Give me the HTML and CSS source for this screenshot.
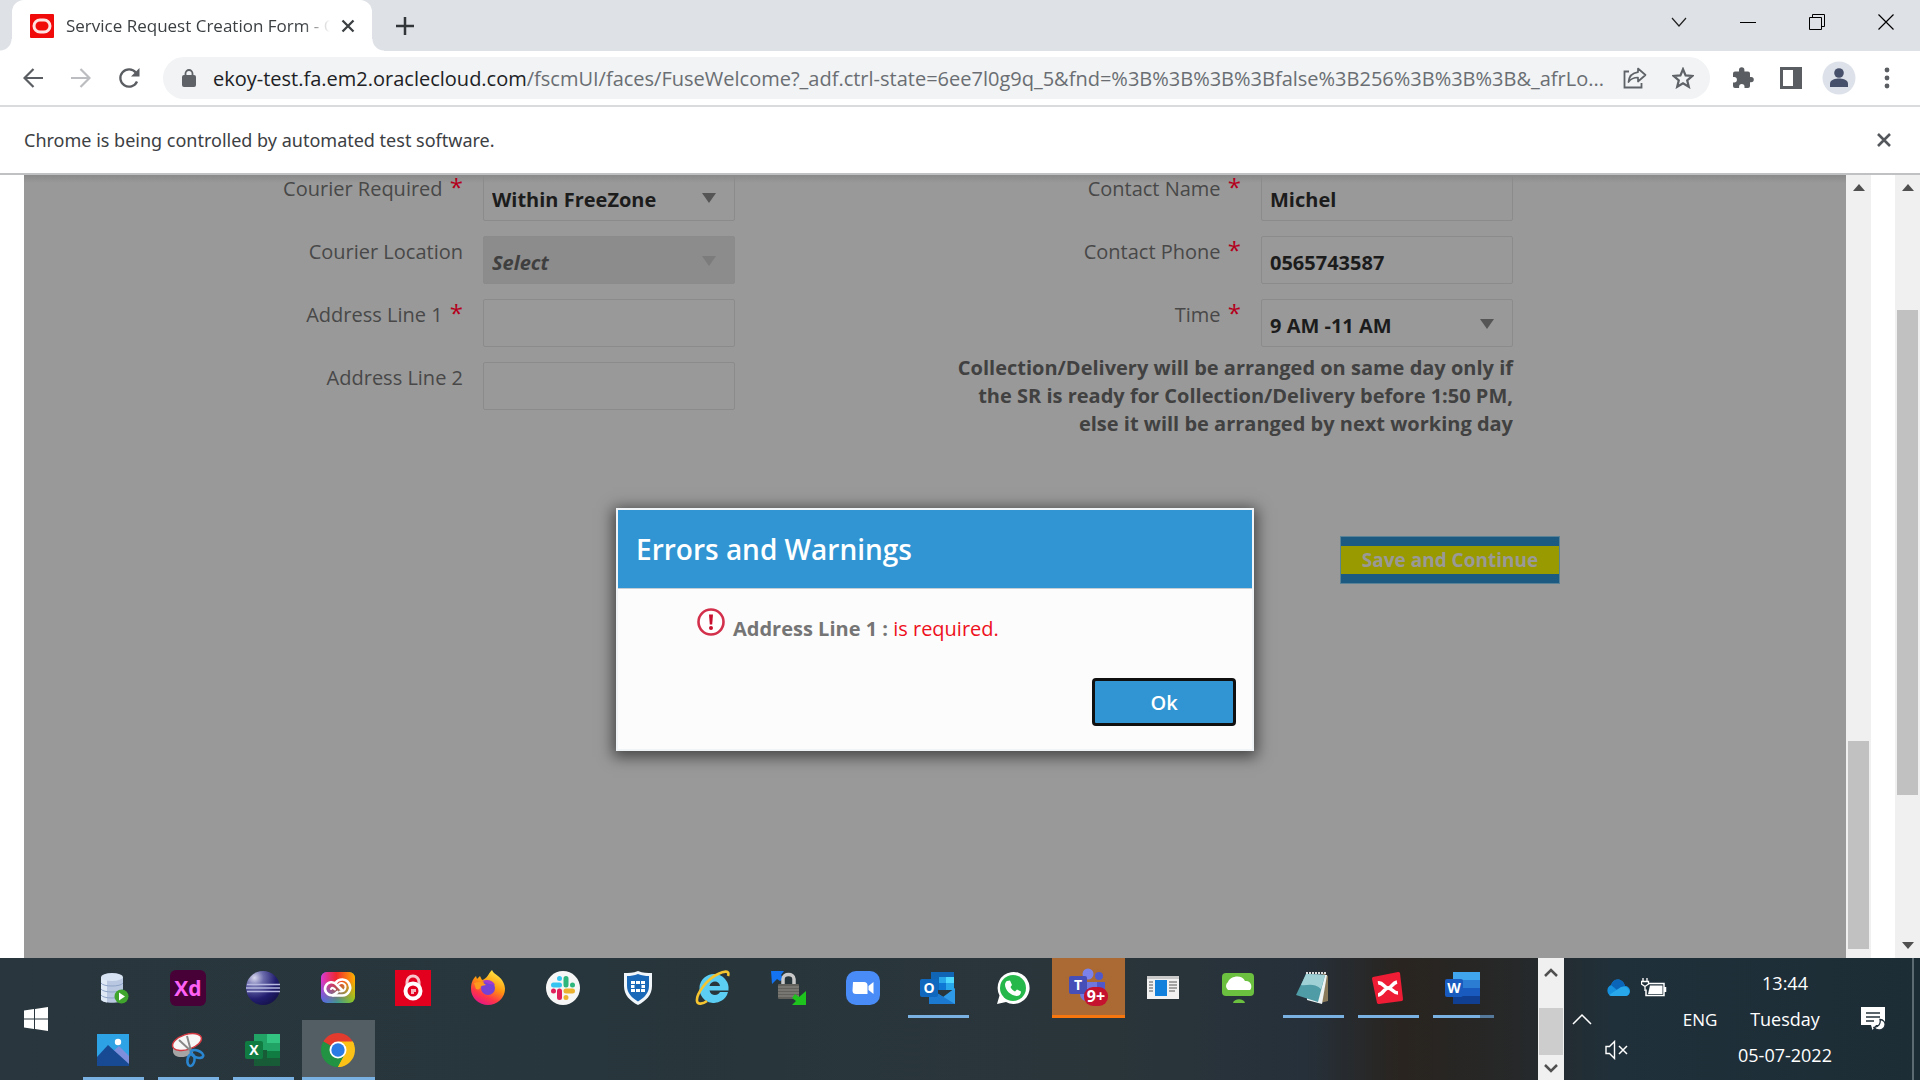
FILE: index.html
```html
<!DOCTYPE html>
<html lang="en">
<head>
<meta charset="utf-8">
<title>Service Request Creation Form</title>
<link rel="stylesheet" href="styles.css">
</head>
<body>
<header class="tabstrip">
  <div class="tab">
    <svg class="favicon" width="24" height="24" viewBox="0 0 24 24"><rect width="24" height="24" rx="1" fill="#f00a0a"/><rect x="4" y="6" width="16" height="12" rx="6" fill="none" stroke="#ffe3e3" stroke-width="3"/></svg>
    <span class="tab-title">Service Request Creation Form - Oracle</span>
    <button class="plain tab-close" aria-label="Close tab"><svg width="16" height="16" viewBox="0 0 16 16"><path d="M2.500 2.500l11 11M13.500 2.500l-11 11" stroke="#3c4043" stroke-width="2.300"/></svg></button>
  </div>
  <button class="plain new-tab" aria-label="New tab"><svg width="18" height="18" viewBox="0 0 18 18"><path d="M9 0v18M0 9h18" stroke="#333639" stroke-width="2.500"/></svg></button>
  <div class="window-controls">
    <button class="plain" aria-label="Search tabs"><svg width="16" height="16" viewBox="0 0 16 16"><path d="M1 4l7 8 7-8" fill="none" stroke="#222" stroke-width="1.200"/></svg></button>
    <button class="plain" aria-label="Minimize"><svg width="16" height="16" viewBox="0 0 16 16"><path d="M0 8.500h16" stroke="#000"/></svg></button>
    <button class="plain" aria-label="Restore"><svg width="16" height="16" viewBox="0 0 16 16"><path d="M.5 3.500h12v12H.5zM3.500 3.500v-3h12v12h-3" fill="none" stroke="#000"/></svg></button>
    <button class="plain" aria-label="Close"><svg width="16" height="16" viewBox="0 0 16 16"><path d="M.5 .5l15 15M15.500 .5l-15 15" stroke="#000" stroke-width="1.200"/></svg></button>
  </div>
</header>

<nav class="toolbar">
  <div class="nav-buttons">
    <button class="plain" aria-label="Back"><svg width="20" height="20" viewBox="0 0 20 20"><path d="M20 10H2M10.500 1L1.500 10l9 9" fill="none" stroke="#5a5d61" stroke-width="2.200"/></svg></button>
    <button class="plain" aria-label="Forward"><svg width="20" height="20" viewBox="0 0 20 20"><path d="M0 10h18M9.500 1l9 9-9 9" fill="none" stroke="#bcbdc0" stroke-width="2.200"/></svg></button>
    <button class="plain" aria-label="Reload"><svg width="22" height="22" viewBox="0 0 22 22"><path d="M19 14.500A8.700 8.700 0 1 1 17.800 5.500" fill="none" stroke="#5a5d61" stroke-width="2.300"/><path d="M21.500 1v8.500H13z" fill="#5a5d61"/></svg></button>
  </div>
  <div class="omnibox">
    <svg class="lock" width="14" height="18" viewBox="0 0 14 18"><rect y="6" width="14" height="12" rx="2" fill="#5f6368"/><path d="M3.500 7V4.500a3.500 3.500 0 0 1 7 0V7" fill="none" stroke="#5f6368" stroke-width="1.800"/></svg>
    <div class="url"><span class="host">ekoy-test.fa.em2.oraclecloud.com</span>/fscmUI/faces/FuseWelcome?_adf.ctrl-state=6ee7l0g9q_5&amp;fnd=%3B%3B%3B%3Bfalse%3B256%3B%3B%3B&amp;_afrLo...</div>
    <button class="plain" aria-label="Share"><svg width="24" height="22" viewBox="0 0 24 22"><path d="M6 4.500H1.500v16h17V16" fill="none" stroke="#5f6368" stroke-width="1.800"/><path d="M15 1.500l7.500 6.500-7.500 6.500v-4c-4 0-7 1-9.500 4.500.5-5 3.500-9 9.500-9.800z" fill="none" stroke="#5f6368" stroke-width="1.700" stroke-linejoin="round"/></svg></button>
    <button class="plain" aria-label="Bookmark"><svg width="22" height="22" viewBox="0 0 22 22"><path d="M11 2.200l2.600 6.200 6.700.5-5.100 4.400 1.600 6.500L11 16.300l-5.800 3.500 1.600-6.500L1.700 8.900l6.700-.5z" fill="none" stroke="#5f6368" stroke-width="2.200"/></svg></button>
  </div>
  <div class="actions">
    <button class="plain" aria-label="Extensions"><svg width="22" height="22" viewBox="0 0 22 22"><path d="M1 6.500a2 2 0 0 1 2-2h4V3a2.700 2.700 0 0 1 5.400 0v1.500H16a2 2 0 0 1 2 2V10h1.200a2.600 2.600 0 0 1 0 5.200H18V19a2 2 0 0 1-2 2h-3.500v-1.200a2.700 2.700 0 0 0-5.400 0V21H3a2 2 0 0 1-2-2v-3.500h1.200a2.700 2.700 0 0 0 0-5.400H1z" fill="#5a5d61"/></svg></button>
    <button class="plain" aria-label="Side panel"><svg width="22" height="22" viewBox="0 0 22 22"><path d="M1.500 1.500h19v19h-19z" fill="none" stroke="#5a5d61" stroke-width="3"/><path d="M13 2h8v18h-8z" fill="#5a5d61"/></svg></button>
    <button class="plain" aria-label="Profile"><svg width="34" height="34" viewBox="0 0 34 34"><circle cx="17" cy="17" r="16.500" fill="#dde2ea"/><circle cx="17" cy="12" r="4.800" fill="#47506b"/><path d="M8 26v-3.500c0-4 6-5 9-5s9 1 9 5V26z" fill="#47506b"/></svg></button>
    <button class="plain" aria-label="Menu"><svg width="6" height="22" viewBox="0 0 6 22"><g fill="#5a5d61"><circle cx="3" cy="3" r="2.400"/><circle cx="3" cy="11" r="2.400"/><circle cx="3" cy="19" r="2.400"/></g></svg></button>
  </div>
</nav>

<div class="infobar">
  <span>Chrome is being controlled by automated test software.</span>
  <button class="plain" aria-label="Dismiss"><svg width="16" height="16" viewBox="0 0 16 16"><path d="M2 2l12 12M14 2L2 14" stroke="#54575b" stroke-width="2.600"/></svg></button>
</div>

<main class="viewport">
  <div class="page">
    <form class="request-form">
      <div class="column">
        <div class="row"><label for="courier">Courier Required <span class="req">*</span></label><div class="pick"><select id="courier" class="field"><option>Within FreeZone</option></select></div></div>
        <div class="row"><label for="location">Courier Location</label><div class="pick off"><select id="location" class="field" disabled><option>Select</option></select></div></div>
        <div class="row"><label for="addr1">Address Line 1 <span class="req">*</span></label><input id="addr1" class="field" type="text"></div>
        <div class="row"><label for="addr2">Address Line 2</label><input id="addr2" class="field" type="text"></div>
      </div>
      <div class="column">
        <div class="row"><label for="name">Contact Name <span class="req">*</span></label><input id="name" class="field" type="text" value="Michel"></div>
        <div class="row"><label for="phone">Contact Phone <span class="req">*</span></label><input id="phone" class="field" type="text" value="0565743587"></div>
        <div class="row"><label for="time">Time <span class="req">*</span></label><div class="pick"><select id="time" class="field"><option>9 AM -11 AM</option></select></div></div>
        <p class="note">Collection/Delivery will be arranged on same day only if<br>the SR is ready for Collection/Delivery before 1:50 PM,<br>else it will be arranged by next working day</p>
      </div>
      <div class="form-actions"><button type="button" class="save"><span>Save and Continue</span></button></div>
    </form>
    <div class="overlay">
      <section class="dialog" role="dialog" aria-labelledby="dlg-title">
        <h2 id="dlg-title">Errors and Warnings</h2>
        <div class="message">
          <svg width="28" height="28" viewBox="0 0 28 28"><circle cx="14" cy="14" r="12.500" fill="#fff" stroke="#d3304c" stroke-width="2.600"/><path d="M12 6.500h4l-.8 10h-2.400z" fill="#c8102e"/><circle cx="14" cy="20" r="2" fill="#c8102e"/></svg>
          <p><b>Address Line 1 :</b> is required.</p>
        </div>
        <button type="button" class="ok">Ok</button>
      </section>
    </div>
  </div>
  <div class="scrollbar inner"><i class="arrow-up"></i><i class="thumb"></i></div>
  <div class="scrollbar outer"><i class="arrow-up"></i><i class="thumb"></i><i class="arrow-down"></i></div>
</main>

<footer class="taskbar">
  <button class="plain start" aria-label="Start"><svg width="24" height="24" viewBox="0 0 24 24"><path d="M0 3.500l10-1.400v9.400H0zM11 2l13-2v11.500H11zM0 12.500h10v9.400L0 20.500zM11 12.500h13V24l-13-2z" fill="#fff"/></svg></button>
  <div class="apps">
    <button class="plain app" aria-label="Database"><svg width="36" height="36" viewBox="0 0 36 36"><path d="M6 7v22c0 5 22 5 22 0V7z" fill="#b9c8e0"/><path d="M6 7v22c0 2 3 3 6 3.500V9z" fill="#dfe8f5"/><ellipse cx="17" cy="7" rx="11" ry="4" fill="#d7e2f2"/><path d="M6 13c2 4 20 4 22 0M6 19c2 4 20 4 22 0M6 25c2 4 20 4 22 0" fill="none" stroke="#8fa5c8"/><circle cx="26.500" cy="26.500" r="7" fill="#3fa52c"/><path d="M24 22.500v8l6-4z" fill="#fff"/></svg></button>
    <button class="plain app" aria-label="Adobe XD"><svg width="36" height="36" viewBox="0 0 36 36"><rect width="36" height="36" rx="6" fill="#470137"/><text x="18" y="26" class="glyph" font-size="21" text-anchor="middle" fill="#ff61f6">Xd</text></svg></button>
    <button class="plain app" aria-label="Eclipse"><svg width="36" height="36" viewBox="0 0 36 36"><defs><radialGradient id="ec" cx=".25" cy=".2" r=".9"><stop offset="0" stop-color="#d8d8ee"/><stop offset=".3" stop-color="#6b6bac"/><stop offset=".7" stop-color="#221d6e"/><stop offset="1" stop-color="#15124a"/></radialGradient></defs><circle cx="18" cy="18" r="17" fill="url(#ec)"/><path d="M2 14.500h33M1 18h34M2 21.500h33" stroke="#b7b9e0" stroke-width="1.300"/></svg></button>
    <button class="plain app" aria-label="Creative Cloud"><svg width="36" height="36" viewBox="0 0 36 36"><defs><linearGradient id="c1" x1="0" x2="1" y1="0" y2="0"><stop offset="0" stop-color="#d83bd2"/><stop offset=".45" stop-color="#f0282e"/><stop offset="1" stop-color="#ffb000"/></linearGradient><linearGradient id="c2" x1="0" x2="1" y1="0" y2="0"><stop offset="0" stop-color="#3f6df0"/><stop offset=".5" stop-color="#25b0a0"/><stop offset="1" stop-color="#7bd021"/></linearGradient><linearGradient id="c3" x1="0" x2="0" y1="0" y2="1"><stop offset=".3" stop-color="#fff"/><stop offset="1" stop-color="#000"/></linearGradient><mask id="cm"><rect width="36" height="36" fill="url(#c3)"/></mask></defs><rect x="1" y="2" width="34" height="31" rx="6" fill="url(#c2)"/><rect x="1" y="2" width="34" height="31" rx="6" fill="url(#c1)" mask="url(#cm)"/><path d="M13 25.500h9.500a8 8 0 1 0-7-12.500" fill="none" stroke="#fff" stroke-width="2.600" stroke-linecap="round"/><path d="M17.500 22c-2 2-4 3.500-6 3.200a6.500 6.500 0 1 1 5-10.700l5.500 5.500" fill="none" stroke="#fff" stroke-width="2.600" stroke-linecap="round"/><path d="M11 19c1-2 2.500-1 4 .5M19 14c3-2.500 7 0 6.500 3.500-.5 3-3.500 4-5.500 4" fill="none" stroke="#fff" stroke-width="2" stroke-linecap="round"/></svg></button>
    <button class="plain app" aria-label="Password safe"><svg width="36" height="36" viewBox="0 0 36 36"><path d="M0 0h36v36H0z" fill="#e3001f"/><path d="M12 16v-4a6 6 0 0 1 12 0v4" fill="none" stroke="#f7c6cc" stroke-width="3"/><circle cx="18" cy="21" r="7.500" fill="#e3001f" stroke="#fff" stroke-width="4"/><path d="M16 24v-5h5v3h-2v2z" fill="#f5b5bd"/></svg></button>
    <button class="plain app" aria-label="Firefox"><svg width="36" height="36" viewBox="0 0 36 36"><defs><linearGradient id="ff" x1=".8" x2=".3" y1="0" y2="1"><stop offset="0" stop-color="#fff14a"/><stop offset=".45" stop-color="#ff980e"/><stop offset=".75" stop-color="#ff3647"/><stop offset="1" stop-color="#e31587"/></linearGradient></defs><path d="M22 0c1 3 4 4 6 6 4 3 7 8 7 13a17 16 0 0 1-34 0c0-5 1-9 5-13l1 3 3-3 2 4c5-1 6-6 10-10z" fill="url(#ff)"/><circle cx="18" cy="18" r="7" fill="#7542d5"/><path d="M4 13c5-2 9-1 12 2l-5 1c-1 3-2 4-5 3z" fill="#ff9a1e"/><path d="M12 11c5-2 11-1 13 4l-6-1z" fill="#a23bd0"/></svg></button>
    <button class="plain app" aria-label="Slack"><svg width="36" height="36" viewBox="0 0 36 36"><circle cx="18" cy="18" r="17" fill="#f6f6f6"/><g stroke-width="5" stroke-linecap="round"><path d="M8.500 15h6M14.500 8.500v0" stroke="#36c5f0"/><path d="M21 8.500v6.500M27.500 15v0" stroke="#2eb67d"/><path d="M21 21h6.500M21 27.500v0" stroke="#ecb22e"/><path d="M14.500 21v6.500M8.500 21v0" stroke="#e01e5a"/></g></svg></button>
    <button class="plain app" aria-label="Security"><svg width="36" height="36" viewBox="0 0 36 36"><path d="M18 1c5 2 9 2 14 2v13c0 9-6 15-14 19C10 31 4 25 4 16V3c5 0 9 0 14-2z" fill="#f1f6fb"/><path d="M18 4c4 1.500 7 2 11 2v10c0 7-5 12-11 15.500C12 28 7 23 7 16V6c4 0 7-.5 11-2z" fill="#1a68b8"/><g fill="#fff"><path d="M11 11h4v3h-4zM16 11h4v3h-4zM21 11h4v3h-4zM11 15h3.500v3H11zM21.500 15H25v3h-3.500zM11 19h4v3h-4zM16 19h4v3h-4zM21 19h4v3h-4z"/></g></svg></button>
    <button class="plain app" aria-label="Internet Explorer"><svg width="36" height="36" viewBox="0 0 36 36"><path d="M19 4a14.500 14.500 0 0 1 14.500 16.500H14.500c.5 3 3 4.500 5.500 4.500 2 0 4-1 5-3h8A14.500 14.500 0 1 1 19 4zm-4.500 12H25c-.5-3-2.500-4.500-5-4.500s-5 1.500-5.500 4.500z" fill="#5ccdf3"/><path d="M33 6c2 -6-4-5-10-2C12 9 1 24 2 31c.5 4 6 3 10 0" fill="none" stroke="#f5c431" stroke-width="2.600"/></svg></button>
    <button class="plain app" aria-label="WinSCP"><svg width="36" height="36" viewBox="0 0 36 36"><path d="M1 1h13l-3 4 3 4-4 2-3-2-5 5z" fill="#1373f0"/><path d="M13 15V9c0-6 11-6 11 0v6" fill="none" stroke="#c9c9c9" stroke-width="3.500"/><rect x="8" y="14" width="21" height="15" rx="1" fill="#63615c"/><path d="M8 17h21M8 20h21M8 23h21M8 26h21" stroke="#8e8c86"/><path d="M36 21v14H22l4-4-4-3 3-4 4 3z" fill="#1ec31e"/></svg></button>
    <button class="plain app" aria-label="Zoom"><svg width="36" height="36" viewBox="0 0 36 36"><rect x="1" y="1" width="34" height="34" rx="10" fill="#4a8cf7"/><path d="M8 12h11a3.500 3.500 0 0 1 3.500 3.500V24H11a3.500 3.500 0 0 1-3.500-3.500zM23.500 16l5-4v12l-5-4z" fill="#fff"/></svg></button>
    <button class="plain app open" aria-label="Outlook"><svg width="36" height="36" viewBox="0 0 36 36"><path d="M11 2h23v18H11z" fill="#1066b5"/><path d="M19 7h7v6h-7z" fill="#28a8ea"/><path d="M26 7h8v6h-8z" fill="#50d9ff"/><path d="M19 13h7v7h-7z" fill="#0f78d4"/><path d="M26 13h8v7h-8z" fill="#28a8ea"/><path d="M9 18l14 9 12-9v16H9z" fill="#2f9be8"/><path d="M9 18l26 16H9z" fill="#1c79d0"/><rect y="9" width="18" height="18" rx="2" fill="#0f67be"/><text x="9" y="23" class="glyph" font-size="14" text-anchor="middle" fill="#fff">O</text></svg></button>
    <button class="plain app" aria-label="WhatsApp"><svg width="36" height="36" viewBox="0 0 36 36"><path d="M2 34l2.500-8.500A16 16 0 1 1 11 32z" fill="#fff"/><circle cx="18" cy="18" r="13" fill="#27b84c"/><path d="M12 11l3-.5 2 4.500-1.500 2c1 2.300 2.600 3.500 4.500 4.500l2-2 4 2c0 3-2 4.500-4.500 4.500-6-.5-11.500-6-11.500-11.500 0-1.500 1-3 2-3.500z" fill="#fff"/></svg></button>
    <button class="plain app alert" aria-label="Teams"><svg width="40" height="40" viewBox="0 0 40 40"><circle cx="20" cy="7" r="5.500" fill="#7b83eb"/><circle cx="31" cy="9" r="4" fill="#5059c9"/><path d="M27 15h10v10c0 5-9 7-10 2z" fill="#5059c9"/><path d="M12 15h17v12c0 10-17 10-17 0z" fill="#7178dd"/><rect x="1" y="9" width="18" height="18" rx="2" fill="#464eb8"/><text x="10" y="23" class="glyph" font-size="14" text-anchor="middle" fill="#fff">T</text><rect x="16" y="20" width="24" height="19" rx="9" fill="#c4122f"/><text x="28" y="35" class="glyph" font-size="16" text-anchor="middle" fill="#fff">9+</text></svg></button>
    <button class="plain app" aria-label="News"><svg width="36" height="36" viewBox="0 0 36 36"><path d="M2 6h32v23H2z" fill="#f1f1f1"/><path d="M2 6h32v3H2z" fill="#c9c9c9"/><path d="M10 10h12v16H10z" fill="#1080dc"/><path d="M4 12h4M4 15h4M4 18h4M4 21h4M24 12h8M24 15h8M24 18h8M24 21h6" stroke="#555"/></svg></button>
    <button class="plain app" aria-label="Cloud desktop"><svg width="36" height="36" viewBox="0 0 36 36"><rect x="2" y="3" width="32" height="23" rx="4" fill="#6cc03f"/><path d="M8 20a5 5 0 0 1 0-8c2-6 14-8 17-1 6-1 8 6 5 9z" fill="#fff"/><path d="M13 33c1-5 11-5 12 0z" fill="#6cc03f"/></svg></button>
    <button class="plain app open" aria-label="Notepad"><svg width="36" height="36" viewBox="0 0 36 36"><path d="M28 3l5 3v25l-8 2z" fill="#8a7a5c"/><path d="M12 4l20 1-5 29-15-4z" fill="#eef3f3"/><path d="M11 4l19 1-7 27L1 25z" fill="#4f9ba6"/><path d="M11 4l19 1-4 14C18 12 12 16 6 15z" fill="#9fd0d6"/><path d="M11 3h20" stroke="#ddd" stroke-width="2" stroke-dasharray="2 1"/></svg></button>
    <button class="plain app open" aria-label="XMind"><svg width="36" height="36" viewBox="0 0 36 36"><path d="M3 7l25-5a2 2 0 0 1 2 1l3 26a2 2 0 0 1-1 2L9 34a2 2 0 0 1-2-1L2 9a2 2 0 0 1 1-2z" fill="#ee1c34"/><path d="M8 13c5-1 6 5 10 5s4-5 9-6M8 25c5 0 6-7 10-7s5 5 10 5" fill="none" stroke="#fff" stroke-width="3.600"/></svg></button>
    <button class="plain app open stacked" aria-label="Word"><svg width="36" height="36" viewBox="0 0 36 36"><path d="M8 2h27v9H8z" fill="#41a5ee"/><path d="M8 10h27v8H8z" fill="#2b7cd3"/><path d="M8 18h27v8H8z" fill="#185abd"/><path d="M8 26h27v8H8z" fill="#103f91"/><rect y="9" width="18" height="18" rx="2" fill="#185abd"/><text x="9" y="23" class="glyph" font-size="14" text-anchor="middle" fill="#fff">W</text></svg></button>
    <button class="plain app open" aria-label="Photos"><svg width="36" height="36" viewBox="0 0 36 36"><path d="M2 2h32v32H2z" fill="#2da2e4"/><path d="M14 23l10-9 10 10v10z" fill="#7d8fdc"/><path d="M2 25L13 13l21 19v2H2z" fill="#174a93"/><circle cx="23" cy="10" r="3.200" fill="#fff"/></svg></button>
    <button class="plain app open" aria-label="Snipping Tool"><svg width="36" height="36" viewBox="0 0 36 36"><path d="M3 15v5c1 5 9 8 20 1l-3-6z" fill="#a5a5a5"/><ellipse cx="17" cy="10" rx="15" ry="7.500" fill="#f7f7f7" stroke="#d23a42" stroke-width="1.500" transform="rotate(-18 17 10)"/><path d="M9 8l13 12M17 4l4 15" stroke="#888" stroke-width="2"/><ellipse cx="27" cy="22" rx="6.500" ry="3.500" fill="none" stroke="#2a86d1" stroke-width="2.600" transform="rotate(20 27 22)"/><ellipse cx="21" cy="28" rx="3.500" ry="6" fill="none" stroke="#2a86d1" stroke-width="2.600" transform="rotate(10 21 28)"/></svg></button>
    <button class="plain app open" aria-label="Excel"><svg width="36" height="36" viewBox="0 0 36 36"><path d="M9 2h26v32H9z" fill="#185c37"/><path d="M9 2h13v16H9z" fill="#21a366"/><path d="M22 2h13v9H22z" fill="#33c481"/><path d="M22 11h13v8H22z" fill="#21a366"/><path d="M22 19h13v7H22z" fill="#107c41"/><rect y="9" width="18" height="18" rx="2" fill="#107c41"/><text x="9" y="23" class="glyph" font-size="14" text-anchor="middle" fill="#fff">X</text></svg></button>
    <button class="plain app open active" aria-label="Chrome"><svg width="36" height="36" viewBox="0 0 36 36"><path d="M18 18L3.300 9.500A17 17 0 0 1 32.700 9.500z" fill="#e33b2e"/><path d="M18 18h-1L32.700 9.500A17 17 0 0 1 18 35z" fill="#fbc116"/><path d="M18 18l0 17A17 17 0 0 1 3.300 9.500z" fill="#229342"/><path d="M18 9.500h14.700a17 17 0 0 1 1.500 3L22 14z" fill="#fbc116"/><path d="M10 22l8 4 7-4-7 13-4-1z" fill="#229342"/><path d="M25.500 21L18 35l6-1 6-8z" fill="#fbc116"/><circle cx="18" cy="18" r="8.500" fill="#fff"/><circle cx="18" cy="18" r="6.700" fill="#2a7be4"/></svg></button>
  </div>
  <div class="task-scroll">
    <svg width="14" height="12" viewBox="0 0 14 12"><path d="M1 9l6-6 6 6" fill="none" stroke="#505050" stroke-width="2.500"/></svg>
    <i></i>
    <svg width="14" height="12" viewBox="0 0 14 12"><path d="M1 3l6 6 6-6" fill="none" stroke="#505050" stroke-width="2.500"/></svg>
  </div>
  <div class="tray">
    <button class="plain" aria-label="Show hidden icons"><svg width="20" height="12" viewBox="0 0 20 12"><path d="M1 11l9-9 9 9" fill="none" stroke="#fff" stroke-width="1.500"/></svg></button>
    <div class="tray-icons">
      <svg width="26" height="20" viewBox="0 0 26 20"><path d="M6 18a6 6 0 0 1 0-11C9-1 18 0 20 8c6 0 7 9 1 10z" fill="#1490df"/><path d="M6 7c3-8 12-7 14 1l-8 4z" fill="#0a64b8"/><path d="M4 17l12-8c7-3 12 7 5 9H6z" fill="#28a8ea"/></svg>
      <svg width="26" height="20" viewBox="0 0 26 20"><path d="M7 5.500h16v12H5v-6M24.500 9v5" fill="none" stroke="#fff" stroke-width="1.500"/><path d="M9 7.500h12.500v8.500H7z" fill="#fff"/><path d="M2 0v3M6 0v3M.5 3.500h7V6L4 8.500.5 6zM4 8v5" fill="none" stroke="#fff" stroke-width="1.300"/></svg>
      <svg width="24" height="20" viewBox="0 0 24 20"><path d="M1 6.500h3.500l5-5v17l-5-5H1z" fill="none" stroke="#fff" stroke-width="1.400"/><path d="M14 6l8 8M22 6l-8 8" stroke="#fff" stroke-width="1.500"/></svg>
    </div>
    <span class="lang">ENG</span>
    <div class="clock"><span>13:44</span><span>Tuesday</span><span>05-07-2022</span></div>
    <button class="plain bell" aria-label="Notifications"><svg width="26" height="26" viewBox="0 0 26 26"><path d="M1 1h24v18h-9l-3.500 5-1.500-5H1z" fill="#fff"/><path d="M6 7h14M6 11h14M6 15h8" stroke="#22303a" stroke-width="1.300"/><path d="M20 13.500c1 4-1.500 7.500-6 8 3 4 10 3 11-2 .5-3-1.500-6-5-6z" fill="#fff" stroke="#22303a" stroke-width="1.300"/></svg></button>
    <i class="peek"></i>
  </div>
</footer>
</body>
</html>
```

FILE: styles.css
```css
* { box-sizing: border-box; }

body {
  margin: 0;
  min-height: 100vh;
  display: flex;
  flex-direction: column;
  background: #fff;
  color: #3c4043;
  font-family: "Open Sans", "Noto Sans", sans-serif;
  font-size: 18px;
  overflow: hidden;
}

.plain {
  display: flex;
  align-items: center;
  justify-content: center;
  padding: 0;
  border: 0;
  background: none;
}

svg { display: block; flex: none; }

/* Tab strip */
.tabstrip {
  display: flex;
  align-items: stretch;
  height: 51px;
  padding-left: 12px;
  background: #dee1e6;
}

.tab {
  position: relative;
  display: flex;
  align-items: center;
  width: 360px;
  padding: 0 16px 0 18px;
  border-radius: 12px 12px 0 0;
  background: #fff;
}

/* Flared feet of the active tab */
.tab::before,
.tab::after {
  content: "";
  position: absolute;
  bottom: 0;
  width: 12px;
  height: 12px;
}

.tab::before { right: 100%; background: radial-gradient(circle at 0 0, transparent 11px, #fff 12px); }
.tab::after { left: 100%; background: radial-gradient(circle at 100% 0, transparent 11px, #fff 12px); }

.tab-title {
  flex: 1;
  margin: 0 10px 0 12px;
  overflow: hidden;
  white-space: nowrap;
  font-size: 17px;
  -webkit-mask-image: linear-gradient(90deg, #000 90%, transparent);
  mask-image: linear-gradient(90deg, #000 90%, transparent);
}

.new-tab { width: 65px; }

.window-controls {
  display: flex;
  margin-left: auto;
  padding-bottom: 8px;
}

.window-controls .plain { width: 69px; }

/* Toolbar */
.toolbar {
  display: flex;
  align-items: center;
  height: 56px;
  border-bottom: 2px solid #d9dbdd;
}

.nav-buttons { display: flex; width: 163px; padding-left: 9px; }
.nav-buttons .plain { width: 48px; }

.omnibox {
  display: flex;
  align-items: center;
  flex: 1;
  min-width: 0;
  height: 42px;
  padding: 0 3px 0 19px;
  border-radius: 21px;
  background: #f1f3f4;
}

.url {
  flex: 1;
  min-width: 0;
  margin-left: 17px;
  overflow: hidden;
  white-space: nowrap;
  font-size: 20px;
  color: #6a6e73;
}

.host { color: #202124; }
.omnibox .plain { width: 48px; }

.actions { display: flex; width: 210px; padding-left: 9px; }
.actions .plain { width: 48px; }

.infobar {
  display: flex;
  align-items: center;
  justify-content: space-between;
  height: 68px;
  padding: 0 28px 0 24px;
  border-bottom: 2px solid #bfc1c2;
  font-family: "Noto Sans", "Open Sans", sans-serif;
}

/* Page area */
.viewport {
  display: flex;
  flex: 1;
  min-height: 0;
  padding-left: 24px;
  overflow: hidden;
}

.page {
  position: relative;
  flex: 1;
  background: linear-gradient(#8a8a8a, #999 8px);
}

.request-form {
  display: grid;
  grid-template-columns: 711fr 778fr 333fr;
  margin-top: -2px;
  font-size: 20px;
  color: #484848;
}

.column { display: flex; flex-direction: column; gap: 15px; }

.row {
  display: flex;
  justify-content: flex-end;
  gap: 20px;
}

.row label { line-height: 32px; }
.req { margin-left: 2px; color: #b4001c; font-size: 24px; line-height: 1px; }

.field {
  display: block;
  width: 252px;
  height: 48px;
  padding: 5px 8px 0;
  border: 1px solid #8b8b8b;
  border-radius: 2px;
  appearance: none;
  background: transparent;
  color: #1c1c1c;
  font: 700 20px "Open Sans", "Noto Sans", sans-serif;
  opacity: 1;
}

.pick { position: relative; }

.pick::after {
  content: "";
  position: absolute;
  top: 20px;
  right: 19px;
  border: 7px solid transparent;
  border-top: 10px solid #555;
  border-bottom: 0;
}

.pick.off::after { border-top-color: #7c7c7c; }
.pick.off .field { background: #8c8c8c; color: #3f3f3f; font-style: italic; }

.note {
  margin: -8px 0 0;
  text-align: right;
  font-weight: 700;
  line-height: 28px;
  color: #414141;
}

.form-actions {
  grid-column: 2 / 4;
  display: flex;
  justify-content: flex-end;
  padding: 98px 286px 0 0;
}

.save {
  width: 220px;
  height: 48px;
  padding: 0;
  border: 1px solid #5a8296;
  background: #1c5a82;
  color: #999;
  font: 700 19px "Open Sans", "Noto Sans", sans-serif;
}

.save span { display: block; line-height: 28px; background: #999900; }

/* Dialog */
.overlay {
  position: absolute;
  inset: 0;
  display: flex;
  align-items: flex-start;
  justify-content: center;
  padding-top: 333px;
}

.dialog {
  display: flex;
  flex-direction: column;
  width: 638px;
  height: 243px;
  border: 2px solid #f0f4f7;
  background: #fcfcfc;
  box-shadow: 0 3px 14px 3px rgba(0, 0, 0, .55);
}

.dialog h2 {
  margin: 0;
  padding: 0 18px;
  border-bottom: 1px solid #c4ccd4;
  background: #3095d2;
  color: #fff;
  font-size: 28px;
  font-weight: 600;
  line-height: 78px;
}

.message { display: flex; gap: 8px; padding: 19px 0 0 79px; }
.message p { margin: 6px 0 0; line-height: 30px; font-size: 20px; color: #ee1020; }
.message b { color: #757575; }

.ok {
  align-self: flex-end;
  width: 144px;
  height: 48px;
  margin: 34px 16px 0 0;
  border: 3px solid #101010;
  border-radius: 4px;
  background: #3095d2;
  color: #fff;
  font: 600 20px "Open Sans", "Noto Sans", sans-serif;
}

/* Scroll bars */
.scrollbar {
  display: flex;
  flex-direction: column;
  align-items: center;
  width: 25px;
  padding: 9px 2px;
  background: #f0f0f0;
}

.inner { margin-right: 24px; }
.thumb { width: 21px; background: #c1c1c1; }
.inner .thumb { height: 208px; margin-top: auto; }
.outer .thumb { height: 485px; margin-top: 119px; }
.arrow-up, .arrow-down { border: 6px solid transparent; }
.arrow-up { border-top: 0; border-bottom: 7px solid #505050; }
.arrow-down { margin-top: auto; border-bottom: 0; border-top: 7px solid #505050; }

/* Task bar */
.taskbar {
  display: flex;
  height: 122px;
  background: linear-gradient(90deg, #29363d 0%, #27363c 30%, #2a353a 58%, #26303a 68%, #29241f 73%, #262829 79%, #20303a 84%, #1d2d36 100%);
  color: #fff;
}

.start { width: 71px; margin-right: 6px; }

.apps {
  display: flex;
  flex: 1;
  flex-wrap: wrap;
  gap: 2px;
  align-content: flex-start;
}

.app { position: relative; width: 73px; height: 60px; padding-right: 2px; }
.app.open::after {
  content: "";
  position: absolute;
  right: 6px;
  bottom: 0;
  left: 6px;
  height: 3px;
  background: #7ab1e3;
}
.app.stacked::after { background: linear-gradient(90deg, #7ab1e3 47px, #55799a 47px); }
.app.active { background: #525d64; }
.app.active::after { right: 0; left: 0; }
.app.alert { border-bottom: 3px solid #f7760d; background: #ab6a34; }

.glyph { font-family: "Open Sans", "Noto Sans", sans-serif; font-weight: 700; }

.task-scroll {
  display: flex;
  flex-direction: column;
  align-items: center;
  width: 26px;
  padding: 9px 1px 6px;
  background: #f0f0f0;
}

.task-scroll i { width: 100%; height: 47px; margin: auto 0 7px; background: #cdcdcd; }

.tray { display: flex; align-items: center; width: 356px; }
.tray > .plain { width: 36px; }

.tray-icons {
  display: grid;
  grid-template-columns: 36px 36px;
  row-gap: 42px;
  padding-left: 5px;
}

.lang { width: 46px; text-align: center; font-size: 17px; }

.clock {
  display: flex;
  flex-direction: column;
  width: 124px;
  text-align: center;
  font-size: 18px;
  line-height: 36px;
}

.tray > .bell { width: 52px; }
.peek { width: 2px; height: 100%; margin: 0 6px 0 auto; background: #5c6a72; }
```
